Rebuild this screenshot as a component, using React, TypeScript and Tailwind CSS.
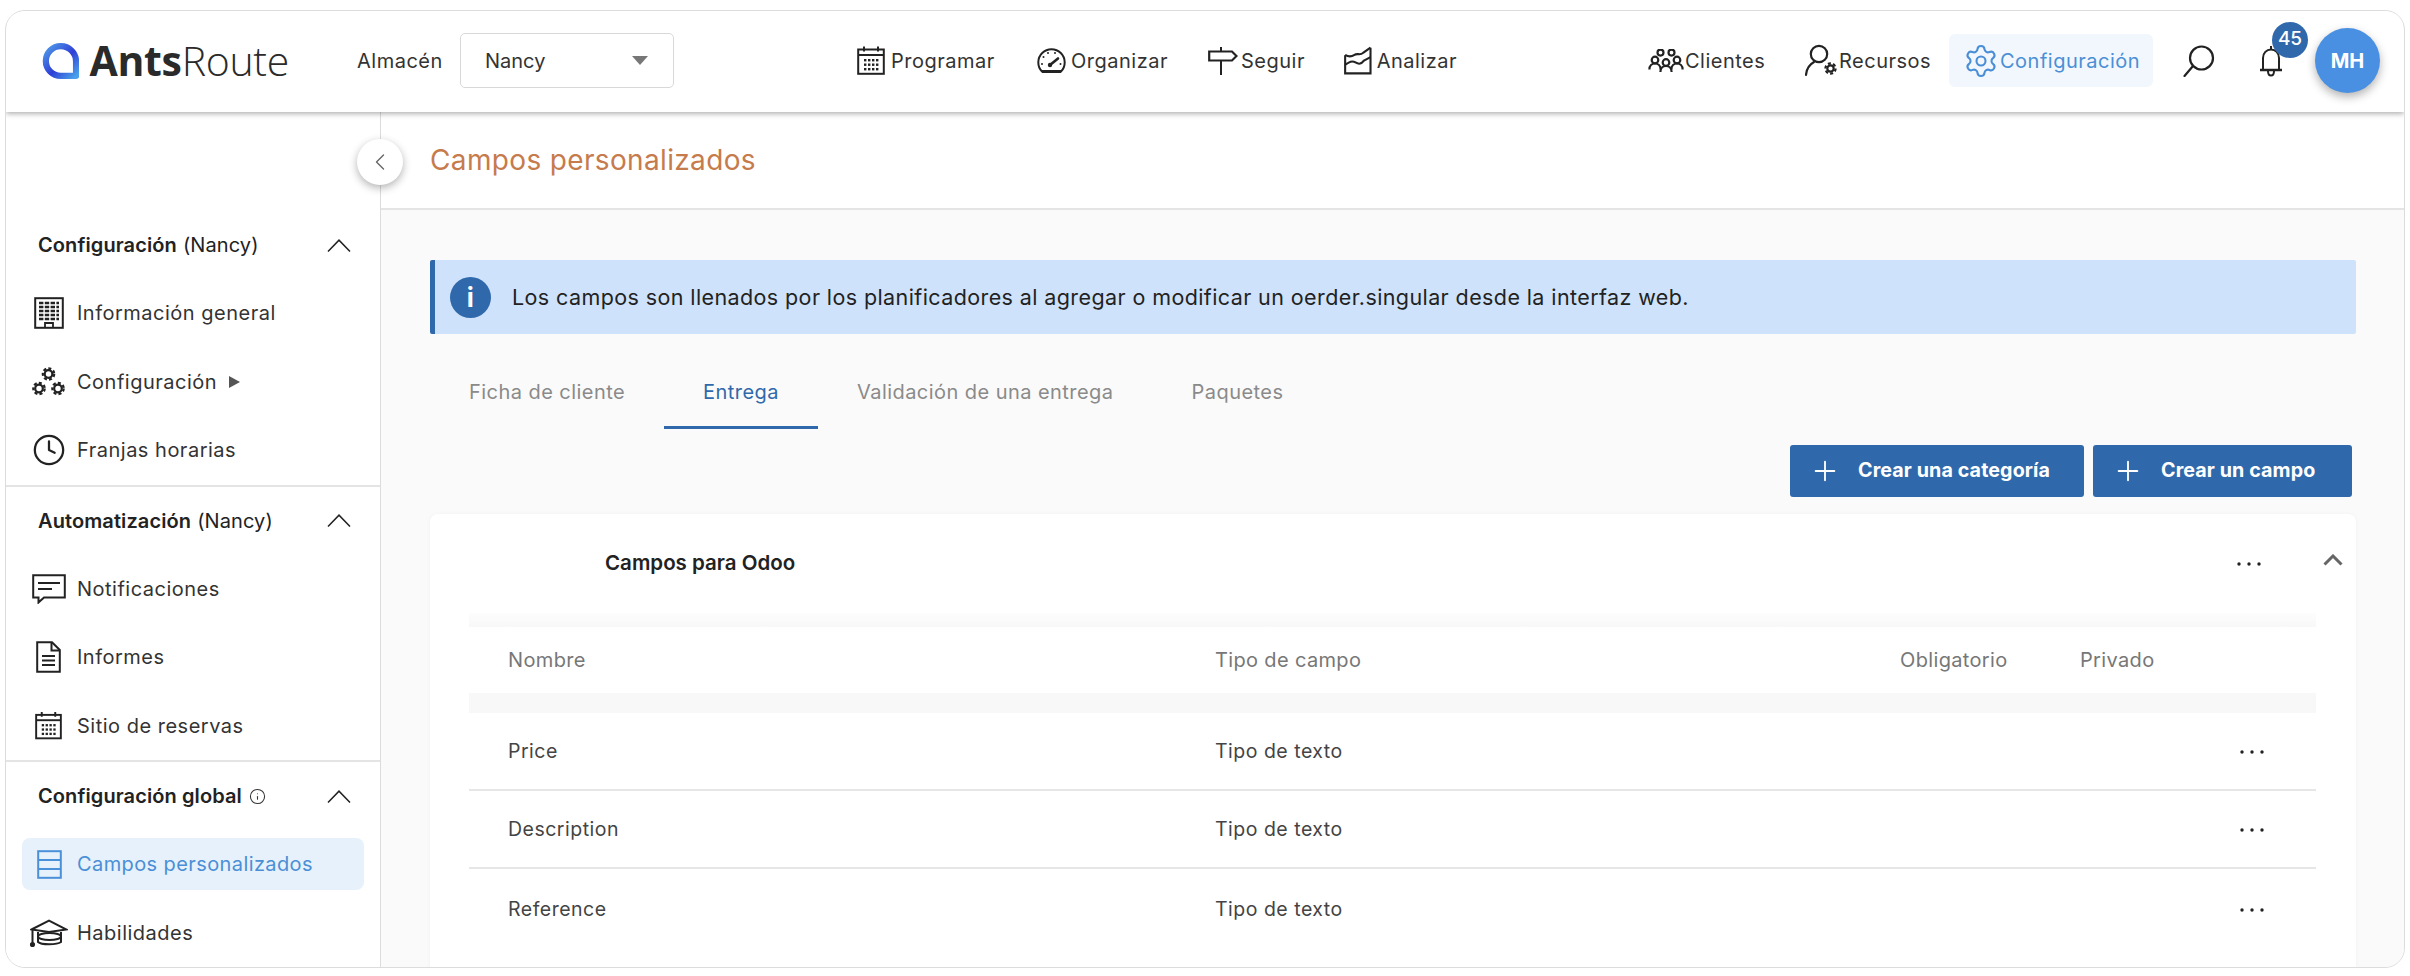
import React from "react";
import { Settings, Clock, Info, Plus, ChevronLeft } from "lucide-react";

const Calendar = ({ w = 28, h = 29 }: { w?: number; h?: number }) => (
  <svg width={w} height={h} viewBox="0 0 28 29" fill="none" stroke="#222">
    <rect x="1.2" y="3.5" width="25.6" height="24.3" strokeWidth="2" />
    <path d="M1 9h26" strokeWidth="2" />
    <path d="M7 0.5v5M21 0.5v5" strokeWidth="2" />
    {[0, 1, 2].map((r) =>
      [0, 1, 2, 3].map((c) => (
        <rect key={r + "-" + c} x={7 + c * 4} y={13 + r * 4.5} width="2.4" height="2.4" fill="#222" stroke="none" />
      ))
    )}
  </svg>
);

const Gauge = () => (
  <svg width="29" height="25" viewBox="0 0 29 25" fill="none" stroke="#222">
    <path d="M5 23.5A13.2 13.2 0 1 1 24 23.5Z" strokeWidth="2" />
    <path d="M5 23.5h19" strokeWidth="3" />
    <path d="M13 17l8-6.5" strokeWidth="2.6" strokeLinecap="round" />
    <circle cx="13" cy="17" r="2.2" fill="#222" stroke="none" />
    {[[5, 16], [6.5, 9], [11, 5], [18, 5], [23.5, 16]].map(([x, y]) => (
      <circle key={x + "," + y} cx={x} cy={y} r="1" fill="#222" stroke="none" />
    ))}
  </svg>
);

const Sign = () => (
  <svg width="30" height="28" viewBox="0 0 30 28" fill="none" stroke="#222">
    <path d="M1.2 4.5H24L28.5 9 24 13.5H1.2Z" strokeWidth="2.2" />
    <path d="M13 0v4.5M13 13.5V28" strokeWidth="2" />
  </svg>
);

const ChartIcon = () => (
  <svg width="29" height="29" viewBox="0 0 29 29" fill="none" stroke="#222" strokeWidth="2.2">
    <path d="M1.2 9V28H27.8V1" />
    <path d="M1.2 8.5C5 11 8 10.5 11 8.5S17 9.5 20 6.5L27.8 1" />
    <path d="M1.2 19C5 16.5 8 14 12 16.5S18 18 21 14.5L27.8 11" />
  </svg>
);

const Person = ({ x, y }: { x: number; y: number }) => (
  <g>
    <circle cx={x} cy={y} r="3.3" />
    <path d={`M${x - 5.6} ${y + 9.5}C${x - 5.6} ${y + 5.5} ${x - 3} ${y + 3.5} ${x} ${y + 3.5}S${x + 5.6} ${y + 5.5} ${x + 5.6} ${y + 9.5}`} />
  </g>
);

const Users = () => (
  <svg width="36" height="24" viewBox="0 0 36 24" fill="none" stroke="#222" strokeWidth="2.2">
    <circle cx="12.5" cy="3.6" r="3" />
    <circle cx="23.5" cy="3.6" r="3" />
    <Person x={7} y={11} />
    <Person x={18} y={13.5} />
    <Person x={29} y={11} />
  </svg>
);

const Cog = ({ cx, cy, r = 3.6, c = "#222" }: { cx: number; cy: number; r?: number; c?: string }) => (
  <g fill="none" stroke={c}>
    <circle cx={cx} cy={cy} r={r} strokeWidth="2.2" />
    <circle cx={cx} cy={cy} r={r + 1.9} strokeWidth="2.2" strokeDasharray="3 2.2" />
  </g>
);

const UserGear = () => (
  <svg width="34" height="33" viewBox="0 0 34 33" fill="none" stroke="#222">
    <circle cx="14" cy="10" r="8.2" strokeWidth="2.2" />
    <path d="M1 31C1.5 25 4.5 20.5 9 18" strokeWidth="2.2" strokeLinecap="round" />
    <Cog cx={25.5} cy={24.5} r={3.2} />
  </svg>
);

const Bell = () => (
  <svg width="24" height="32" viewBox="0 0 24 32" fill="none" stroke="#222" strokeWidth="2">
    <path d="M12 1v3" />
    <path d="M4 24V13C4 8 7.5 4.5 12 4.5S20 8 20 13V24" />
    <path d="M1 25h22" strokeWidth="2.4" />
    <path d="M9 26c0 3 1.3 4.5 3 4.5s3-1.5 3-4.5" />
  </svg>
);

const SearchIcon = () => (
  <svg width="32" height="32" viewBox="0 0 32 32" fill="none" stroke="#222" strokeWidth="2.2">
    <circle cx="18.5" cy="13" r="11.5" />
    <path d="M10 21L1.5 31" strokeLinecap="round" />
  </svg>
);

const Building = () => (
  <svg width="30" height="32" viewBox="0 0 30 32" fill="none" stroke="#222">
    <rect x="1.2" y="1.2" width="27.6" height="29.6" strokeWidth="2" />
    <path d="M5 6h20M5 10h20M5 14h20M5 18h20M5 22h20" strokeWidth="2.4" strokeDasharray="4.4 1.4" />
    <path d="M11 31v-5h8v5" strokeWidth="1.8" />
  </svg>
);

const Cogs = () => (
  <svg width="33" height="29" viewBox="0 0 33 29" fill="none">
    <Cog cx={16.5} cy={7} r={3.8} />
    <Cog cx={7} cy={21.5} r={3.8} />
    <Cog cx={26} cy={21.5} r={3.8} />
  </svg>
);

const Comment = () => (
  <svg width="34" height="30" viewBox="0 0 34 30" fill="none" stroke="#222" strokeWidth="2">
    <path d="M1.2 1.2H32.8V23.5H12L6.5 28.5V23.5H1.2Z" />
    <path d="M6 9h22M6 15h14" />
  </svg>
);

const FileIcon = () => (
  <svg width="25" height="32" viewBox="0 0 25 32" fill="none" stroke="#222" strokeWidth="2">
    <path d="M1.2 1.2H16L23.8 9V30.8H1.2Z" />
    <path d="M15.5 1.2V9.5H23.8" />
    <path d="M6 15h13M6 19.5h13M6 24h13" />
  </svg>
);

const TableIcon = () => (
  <svg width="25" height="29" viewBox="0 0 25 29" fill="none" stroke="#4a90d9" strokeWidth="2">
    <rect x="1.2" y="1.2" width="22.6" height="26.6" />
    <path d="M1 10h23M1 19h23" />
  </svg>
);

const Cap = () => (
  <svg width="38" height="28" viewBox="0 0 38 28" fill="none" stroke="#222" strokeWidth="2">
    <path d="M1.5 10.5L19 1.5 36.5 10.5 19 13Z" />
    <path d="M8 13V23C11 26 27 26 31 23V13" />
    <ellipse cx="19.5" cy="17.5" rx="11.5" ry="3.5" />
    <path d="M2.5 11V25" />
    <circle cx="2.5" cy="25.5" r="1.6" fill="#222" />
  </svg>
);

const Up = () => (
  <svg width="24" height="13" viewBox="0 0 24 13" fill="none" stroke="#222" strokeWidth="1.5">
    <path d="M1 12.5L12 1.2 23 12.5" />
  </svg>
);

const Dots = () => (
  <svg width="24" height="4" viewBox="0 0 24 4" fill="#222">
    <circle cx="2" cy="2" r="1.7" />
    <circle cx="12" cy="2" r="1.7" />
    <circle cx="22" cy="2" r="1.7" />
  </svg>
);

const NavItem = ({ icon, label, w, gap }: { icon: React.ReactNode; label: string; w: string; gap: string }) => (
  <div className={`flex items-center ${w} ${gap} text-[20px] tracking-[0.5px] text-[#333]`}>
    {icon}
    <span>{label}</span>
  </div>
);

const SideTitle = ({ children }: { children: React.ReactNode }) => (
  <div className="flex h-[68px] items-center justify-between pl-[32px] pr-[29px] text-[20px] tracking-[0.1px] text-[#222]">
    <div className="flex items-center">{children}</div>
    <Up />
  </div>
);

const SideItem = ({ icon, label, extra }: { icon: React.ReactNode; label: string; extra?: React.ReactNode }) => (
  <div className="flex h-[68.5px] items-center pl-[14px] text-[20px] tracking-[0.5px] text-[#333]">
    <div className="flex w-[57px] justify-center">{icon}</div>
    <span>{label}</span>
    {extra}
  </div>
);

const cols = "grid grid-cols-[707px_685px_180px_158px_1fr] items-center pl-[39px]";

const Row = ({ name, border, h }: { name: string; border: boolean; h: string }) => (
  <div className={`${cols} ${h} ${border ? "border-b-2 border-[#e6e6e6]" : ""} pt-[2px] text-[19.5px] tracking-[0.5px] text-[#444]`}>
    <span>{name}</span>
    <span>Tipo de texto</span>
    <span />
    <span />
    <span className="pl-[2px]">
      <Dots />
    </span>
  </div>
);

const Tab = ({ label, active }: { label: string; active?: boolean }) => (
  <div
    className={`flex h-[69px] items-center border-b-[3px] px-[39px] pb-[3px] text-[20px] tracking-[0.45px] ${
      active ? "border-[#2f69ab] text-[#2f69ab]" : "border-transparent text-[#8a8a8a]"
    }`}
  >
    {label}
  </div>
);

const CreateButton = ({ label, w }: { label: string; w: string }) => (
  <div className={`flex h-[52px] ${w} items-center rounded-[3px] bg-[#2f69ab] pl-[22px] text-[19.7px] font-bold tracking-[0.1px] text-white`}>
    <Plus size={32} strokeWidth={1.4} className="-ml-[3px]" />
    <span className="ml-[17px]">{label}</span>
  </div>
);

export default function App() {
  return (
    <div className="h-[976px] w-[2410px] overflow-hidden bg-white pb-[8px] pl-[5px] pr-[5px] pt-[10px] font-['Inter',sans-serif]">
      <div className="relative flex h-full flex-col overflow-hidden rounded-[20px] border border-[#dcdcdc] bg-white">
        {/* header */}
        <header className="relative z-10 flex h-[101px] shrink-0 items-center bg-white pb-[2px] pl-[36px] pr-[24px] shadow-[0_2px_5px_rgba(0,0,0,0.3)]">
          <div className="flex w-[247px] items-center">
            <svg width="39" height="38" viewBox="0 0 39 38" fill="none">
              <defs>
                <linearGradient id="lg" x1="0" y1="0" x2="1" y2="1">
                  <stop offset="0" stopColor="#4f9be8" />
                  <stop offset="0.55" stopColor="#2f3fd6" />
                  <stop offset="1" stopColor="#4aa0ea" />
                </linearGradient>
              </defs>
              <path d="M19.5 3.5A16 16 0 0 1 35.5 19.5V34.5H19.5A15.5 15.5 0 1 1 19.5 3.5Z" stroke="url(#lg)" strokeWidth="6.5" strokeLinejoin="round" />
            </svg>
            <span className="ml-[10px] font-['Open_Sans',sans-serif] text-[41px] leading-none tracking-[-0.3px] text-[#2a2a2a]">
              <b className="font-bold">Ants</b>
              <span className="font-light">Route</span>
            </span>
          </div>
          <span className="ml-[68px] w-[103px] text-[20px] tracking-[0.5px] text-[#333]">Almacén</span>
          <div className="flex h-[55px] w-[214px] items-center justify-between rounded-[5px] border border-[#d8d8d8] pl-[24px] pr-[25px] text-[20px] text-[#333]">
            <span>Nancy</span>
            <span className="h-0 w-0 border-x-[8px] border-t-[9px] border-x-transparent border-t-[#777]" />
          </div>
          <div className="ml-[183px] flex items-center">
            <NavItem icon={<Calendar />} label="Programar" w="w-[180px]" gap="gap-[6px]" />
            <NavItem icon={<Gauge />} label="Organizar" w="w-[171px]" gap="gap-[5px]" />
            <NavItem icon={<Sign />} label="Seguir" w="w-[136px]" gap="gap-[3px]" />
            <NavItem icon={<ChartIcon />} label="Analizar" w="w-[113px]" gap="gap-[5px]" />
          </div>
          <div className="ml-auto flex items-center">
            <NavItem icon={<Users />} label="Clientes" w="w-[157px]" gap="gap-[1px]" />
            <NavItem icon={<UserGear />} label="Recursos" w="w-[144px]" gap="gap-[0px]" />
            <div className="flex h-[53px] w-[204px] items-center gap-[1px] rounded-[6px] bg-[#f1f7fd] pl-[14px] text-[20px] tracking-[0.5px] text-[#4a8fd6]">
              <Settings size={36} strokeWidth={1.4} />
              <span>Configuración</span>
            </div>
            <div className="ml-[30px]">
              <SearchIcon />
            </div>
            <div className="relative ml-[44px] w-[24px]">
              <Bell />
              <div className="absolute -top-[23px] left-[13px] flex h-[36px] w-[36px] items-center justify-center rounded-full bg-[#2f69ab] text-[19px] font-medium text-white">
                45
              </div>
            </div>
            <div className="ml-[32px] flex h-[65px] w-[65px] items-center justify-center rounded-full bg-[#4a90e2] text-[20px] font-bold text-white shadow-[0_4px_10px_rgba(0,0,0,0.3)]">
              MH
            </div>
          </div>
        </header>

        <div className="flex min-h-0 flex-1">
          {/* sidebar */}
          <aside className="w-[375px] shrink-0 border-r border-[#dcdcdc] bg-white pt-[99px]">
            <SideTitle>
              <b className="font-semibold">Configuración</b>
              <span className="ml-[6px]">(Nancy)</span>
            </SideTitle>
            <SideItem icon={<Building />} label="Información general" />
            <SideItem
              icon={<Cogs />}
              label="Configuración"
              extra={<span className="ml-[12px] h-0 w-0 border-y-[6px] border-l-[11px] border-y-transparent border-l-[#555]" />}
            />
            <SideItem icon={<Clock size={34} strokeWidth={1.6} color="#222" />} label="Franjas horarias" />
            <div className="border-t-2 border-[#e4e4e4]" />
            <SideTitle>
              <b className="font-semibold">Automatización</b>
              <span className="ml-[6px]">(Nancy)</span>
            </SideTitle>
            <SideItem icon={<Comment />} label="Notificaciones" />
            <SideItem icon={<FileIcon />} label="Informes" />
            <SideItem icon={<Calendar w={27} h={29} />} label="Sitio de reservas" />
            <div className="border-t-2 border-[#e4e4e4]" />
            <SideTitle>
              <b className="font-semibold">Configuración global</b>
              <Info size={17} strokeWidth={1.5} className="ml-[7px] text-[#333]" />
            </SideTitle>
            <div className="flex h-[68.5px] items-center px-[16px]">
              <div className="flex h-[52px] w-full items-center rounded-[8px] bg-[#e6f1fb] text-[20px] tracking-[0.4px] text-[#4a8fd6]">
                <div className="flex w-[55px] justify-center">
                  <TableIcon />
                </div>
                <span>Campos personalizados</span>
              </div>
            </div>
            <SideItem icon={<Cap />} label="Habilidades" />
          </aside>

          {/* main */}
          <main className="relative min-w-0 flex-1 bg-[#fafafa]">
            <div className="absolute -left-[24px] top-[27px] z-10 flex h-[46px] w-[46px] items-center justify-center rounded-full bg-white text-[#666] shadow-[0_3px_8px_rgba(0,0,0,0.3)]">
              <ChevronLeft size={28} strokeWidth={1.2} />
            </div>
            <div className="flex h-[98px] items-center border-b-2 border-[#e4e4e4] bg-white pl-[49px] text-[28px] tracking-[0.35px] text-[#c67b4c]">
              Campos personalizados
            </div>
            <div className="pl-[49px] pr-[48px] pt-[50px]">
              <div className="flex h-[74px] items-center rounded-[2px] border-l-[5px] border-[#2f69ab] bg-[#cfe2fb] pl-[15px] text-[21.5px] tracking-[0.4px] text-[#222]">
                <div className="flex h-[41px] w-[41px] items-center justify-center rounded-full bg-[#2f69ab] text-[26px] font-bold text-white">
                  i
                </div>
                <span className="ml-[21px]">Los campos son llenados por los planificadores al agregar o modificar un oerder.singular desde la interfaz web.</span>
              </div>
              <div className="mt-[26px] flex">
                <Tab label="Ficha de cliente" />
                <Tab label="Entrega" active />
                <Tab label="Validación de una entrega" />
                <Tab label="Paquetes" />
              </div>
              <div className="mt-[16px] flex justify-end gap-[9px] pr-[4px]">
                <CreateButton label="Crear una categoría" w="w-[294px]" />
                <CreateButton label="Crear un campo" w="w-[259px]" />
              </div>
              <section className="mt-[17px] rounded-t-[8px] bg-white pb-[40px] pl-[39px] pr-[40px] shadow-[0_0_4px_rgba(0,0,0,0.04)]">
                <div className="flex h-[99px] items-center pl-[136px] text-[20.5px] font-semibold text-[#222]">
                  <span>Campos para Odoo</span>
                  <span className="ml-auto">
                    <Dots />
                  </span>
                  <span className="-mr-[27px] ml-[62px] -mt-[8px]">
                    <svg width="20" height="12" viewBox="0 0 20 12" fill="none" stroke="#666" strokeWidth="3">
                      <path d="M1.5 10.5L10 2l8.5 8.5" />
                    </svg>
                  </span>
                </div>
                <div className="h-[14px] bg-gradient-to-b from-[#fdfdfd] to-[#f8f8f8]" />
                <div className={`${cols} h-[66px] text-[20px] tracking-[0.35px] text-[#777]`}>
                  <span>Nombre</span>
                  <span>Tipo de campo</span>
                  <span>Obligatorio</span>
                  <span>Privado</span>
                </div>
                <div className="h-[20px] bg-[#f8f8f9]" />
                <Row name="Price" border h="h-[78px]" />
                <Row name="Description" border h="h-[78px]" />
                <Row name="Reference" border={false} h="h-[80px]" />
              </section>
            </div>
          </main>
        </div>
      </div>
    </div>
  );
}
